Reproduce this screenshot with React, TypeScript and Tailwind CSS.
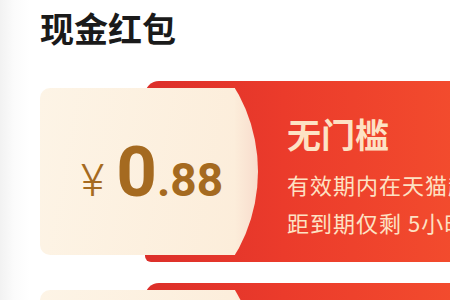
const cards = [
  {
    amount: "0",
    cents: ".88",
    title: "无门槛",
    desc: "有效期内在天猫超市使用",
    expire: "距到期仅剩 5小时59分",
  },
  {
    amount: "1",
    cents: ".00",
    title: "无门槛",
    desc: "有效期内在天猫超市使用",
    expire: "距到期仅剩 5小时59分",
  },
];

const CouponCard = ({ card }: { card: (typeof cards)[number] }) => {
  return (
    <div className="relative flex h-[181px] shrink-0">
      {/* red backdrop */}
      <div className="absolute inset-y-0 left-[105px] -right-10 rounded-tl-[14px] rounded-bl-[6px] bg-[linear-gradient(to_right,#dc2f2a,#eb3b2b_40%,#f44f2e)]" />

      {/* cream amount panel: body + arc-shaped cap on the right */}
      <div className="relative mt-[7px] flex h-[167px] shrink-0">
        <div className="flex w-[195px] items-center rounded-l-[10px] bg-[linear-gradient(100deg,#fdf4e6,#fcedda)] pl-[41px]">
          <div className="flex items-baseline text-[#a56a20] [font-family:Roboto,'Liberation_Sans',sans-serif]">
            <span className="mr-[12px] text-[45px] font-light leading-none">¥</span>
            <span className="text-[71px] font-bold leading-none">{card.amount}</span>
            <span className="text-[46px] font-bold leading-none">{card.cents}</span>
          </div>
        </div>
        <div className="w-[23px] bg-[linear-gradient(to_right,#fcedda,#f8dccd)] [clip-path:circle(163px_at_-140px_50%)]" />
      </div>

      {/* text */}
      <div className="relative flex min-w-0 flex-1 flex-col overflow-hidden whitespace-nowrap pl-[29px] pt-[35px] text-[#fde2c4] [font-family:'Noto_Sans_CJK_SC',sans-serif]">
        <div className="text-[34px] font-bold leading-[36px]">{card.title}</div>
        <div className="mt-[20px] text-[22px] leading-[24px] tracking-[1px]">{card.desc}</div>
        <div className="mt-[14px] text-[22px] leading-[24px] tracking-[1px]">{card.expire}</div>
      </div>
    </div>
  );
};

export default function App() {
  return (
    <div className="h-[300px] w-[450px] overflow-hidden bg-[linear-gradient(to_right,#f2f2f2,#fbfbfb_14px,#ffffff_30px)]">
      <h1 className="pl-10 pt-[10px] text-[34px] font-bold leading-[36px] text-[#1a1a1a] [font-family:'Noto_Sans_CJK_SC',sans-serif]">
        现金红包
      </h1>
      <div className="mt-[35px] flex flex-col gap-[21px] pl-10">
        {cards.map((card, i) => (
          <CouponCard key={i} card={card} />
        ))}
      </div>
    </div>
  );
}
